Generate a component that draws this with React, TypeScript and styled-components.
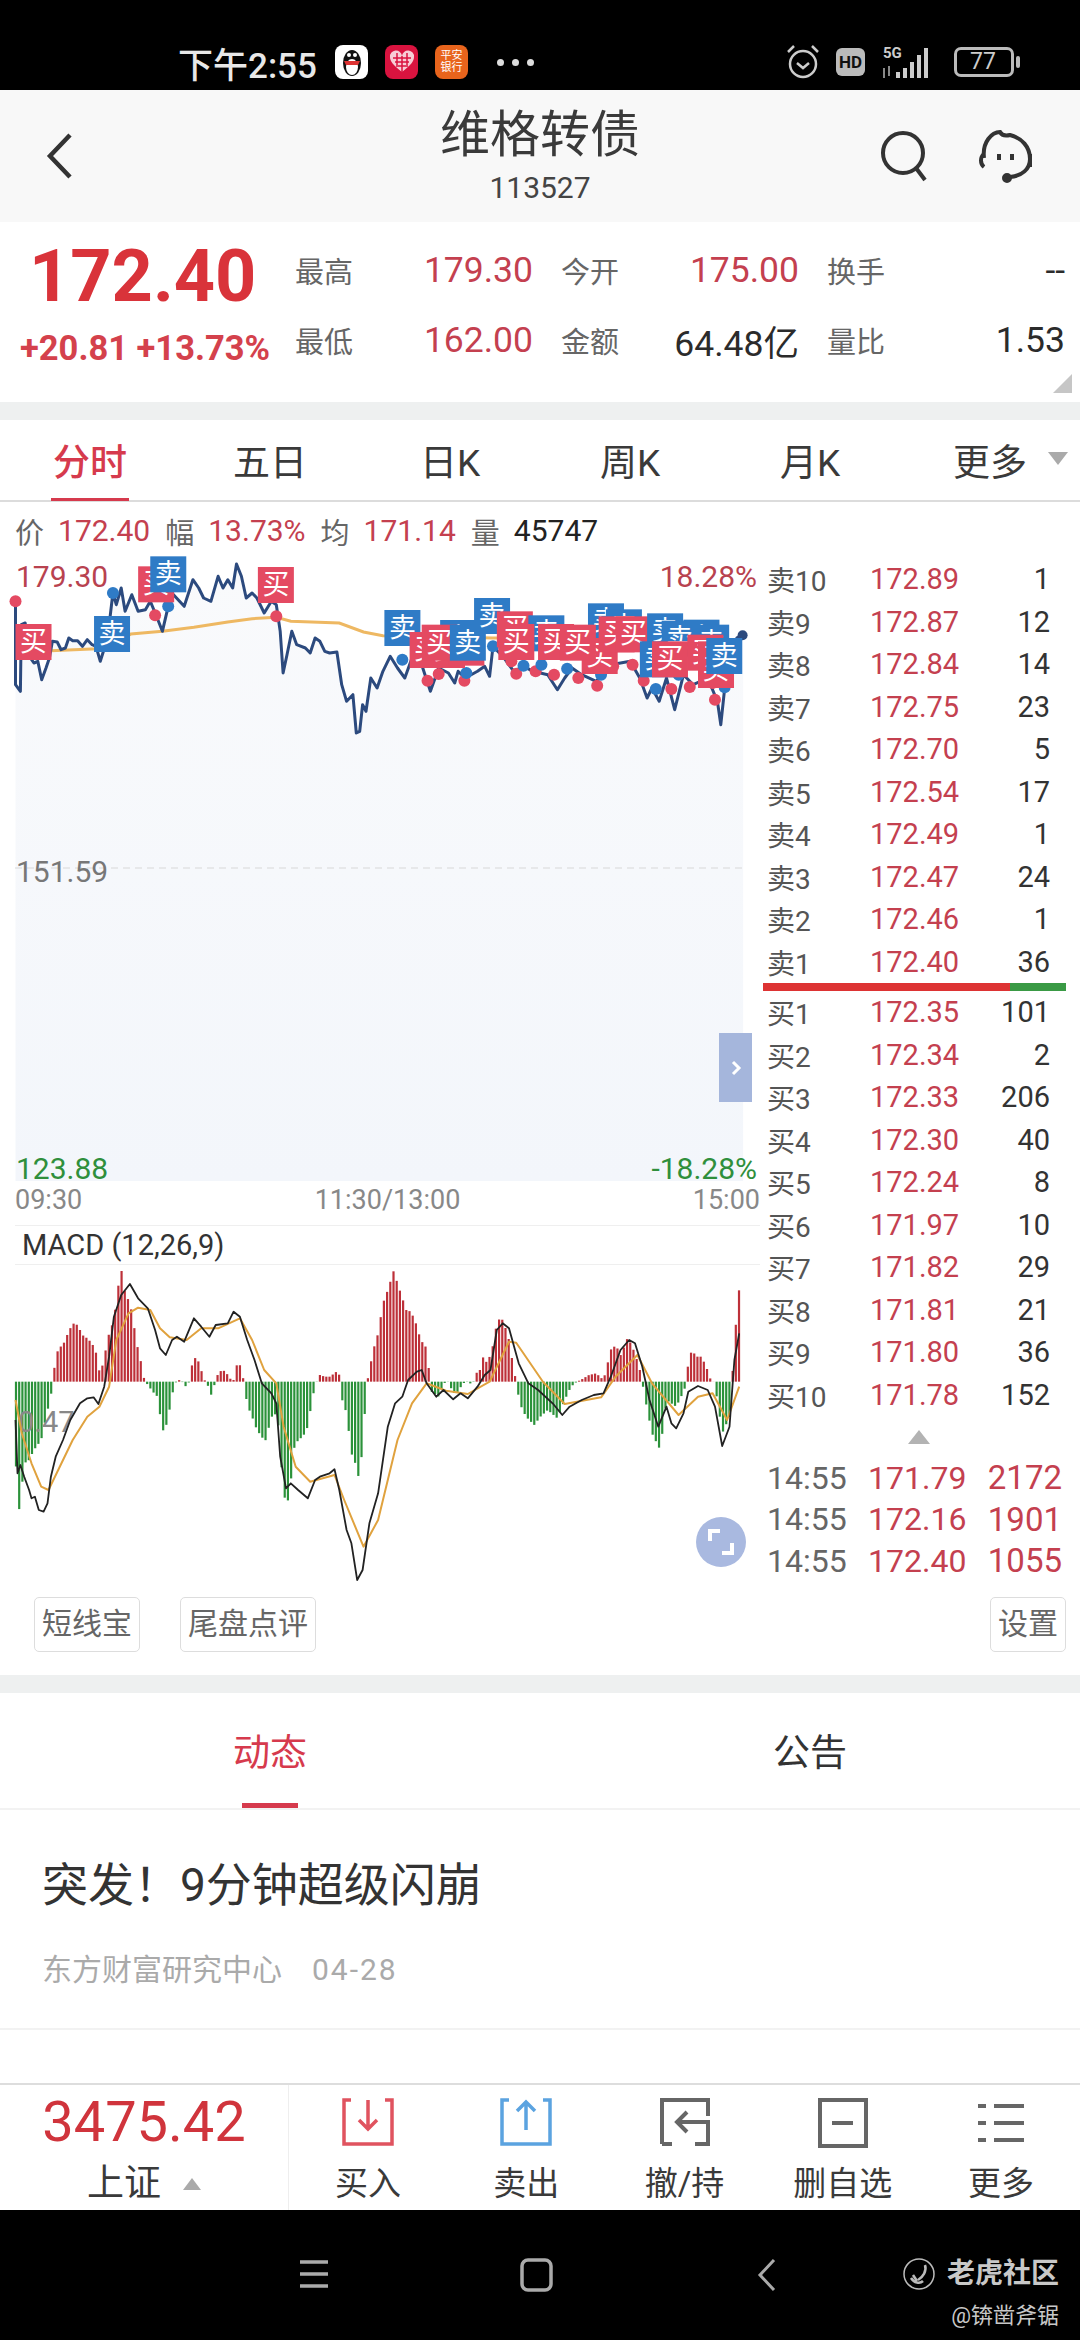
import React from "react";
import styled, { createGlobalStyle } from "styled-components";

const FONT = `Roboto, "Noto Sans CJK SC", sans-serif`;
const RED = "#c4404f";

const GlobalStyle = createGlobalStyle`
  html, body { margin: 0; padding: 0; background: #fff; }
  * { box-sizing: border-box; }
  body { font-family: ${FONT}; }
`;

const Page = styled.div`
  width: 1080px;
  height: 2340px;
  overflow: hidden;
  display: flex;
  flex-direction: column;
  background: #fff;
  color: #333;
`;

/* ---------- status bar ---------- */
const StatusBar = styled.div`
  height: 90px;
  flex: none;
  background: #000;
  color: #e8e8e8;
  display: flex;
  align-items: center;
  padding: 34px 0 0 178px;
`;
const Clock = styled.span`
  font-size: 35px;
  font-weight: 500;
  width: 157px;
`;
const AppBadge = styled.span<{ $bg: string }>`
  width: 33px;
  height: 34px;
  margin-right: 17px;
  border-radius: 8px;
  background: ${(p) => p.$bg};
  display: flex;
  align-items: center;
  justify-content: center;
  flex: none;
`;
const BadgeText = styled.span`
  font-size: 11px;
  line-height: 12px;
  color: #fff;
  text-align: center;
  width: 24px;
`;
const Dots = styled.span`
  display: flex;
  gap: 8px;
  margin-left: 12px;
`;
const Dot = styled.i`
  width: 7px;
  height: 7px;
  border-radius: 50%;
  background: #ddd;
`;
const StatusRight = styled.div`
  margin-left: auto;
  padding-right: 66px;
  display: flex;
  align-items: center;
  gap: 16px;
`;
const HdBadge = styled.span`
  width: 29px;
  height: 28px;
  border-radius: 6px;
  background: #bbb;
  color: #111;
  font-size: 17px;
  font-weight: 700;
  display: flex;
  align-items: center;
  justify-content: center;
`;
const Battery = styled.span`
  width: 60px;
  height: 30px;
  border: 3px solid #bbb;
  border-radius: 7px;
  color: #ccc;
  font-size: 23px;
  line-height: 24px;
  padding-left: 13px;
  position: relative;
  margin-left: 1px;
  &::after {
    content: "";
    position: absolute;
    right: -9px;
    top: 6px;
    width: 4px;
    height: 12px;
    border-radius: 2px;
    background: #bbb;
  }
`;

/* ---------- title bar ---------- */
const TitleBar = styled.div`
  height: 132px;
  flex: none;
  background: #f8f8f8;
  display: grid;
  grid-template-columns: 1fr auto 1fr;
  align-items: center;
  padding: 0 44px 0 44px;
`;
const TitleBlock = styled.div`
  text-align: center;
`;
const Title = styled.div`
  font-size: 50px;
  line-height: 64px;
  color: #3a3a3a;
`;
const Code = styled.div`
  font-size: 30px;
  line-height: 42px;
  color: #444;
`;
const TitleActions = styled.div`
  display: flex;
  justify-content: flex-end;
  align-items: center;
  gap: 46px;
`;

/* ---------- quote ---------- */
const Quote = styled.div`
  height: 180px;
  flex: none;
  position: relative;
  display: flex;
  padding-top: 13px;
`;
const QuoteMain = styled.div`
  width: 295px;
  flex: none;
  padding-left: 20px;
`;
const BigPrice = styled.div`
  font-size: 72px;
  line-height: 84px;
  font-weight: 700;
  color: #d9333a;
  padding-left: 9px;
  white-space: nowrap;
`;
const Change = styled.div`
  margin-top: 9px;
  font-size: 34.5px;
  line-height: 40px;
  font-weight: 700;
  color: #d4414c;
  white-space: nowrap;
`;
const QuoteGrid = styled.div`
  display: grid;
  grid-template-columns: repeat(3, 238px);
  grid-auto-rows: 70px;
  column-gap: 28px;
`;
const QuoteCell = styled.div`
  display: flex;
  align-items: center;
  justify-content: space-between;
`;
const QuoteLabel = styled.span`
  font-size: 29px;
  color: #666;
`;
const QuoteValue = styled.span<{ $red?: boolean }>`
  font-size: 35.5px;
  color: ${(p) => (p.$red ? RED : "#2b2b2b")};
`;
const CornerMark = styled.i`
  position: absolute;
  right: 8px;
  bottom: 9px;
  width: 0;
  height: 0;
  border-left: 19px solid transparent;
  border-bottom: 19px solid #c6c6c6;
`;
const Gap = styled.div`
  height: 18px;
  flex: none;
  background: #eef0f0;
`;

/* ---------- period tabs ---------- */
const PeriodTabs = styled.div`
  height: 82px;
  flex: none;
  display: grid;
  grid-template-columns: repeat(6, 180px);
  border-bottom: 2px solid #dcdcdc;
`;
const PeriodTab = styled.div<{ $active?: boolean }>`
  position: relative;
  display: flex;
  align-items: center;
  justify-content: center;
  font-size: 37px;
  font-weight: ${(p) => (p.$active ? 500 : 400)};
  color: ${(p) => (p.$active ? "#d63a4d" : "#3a3a3a")};
  &::after {
    content: "";
    display: ${(p) => (p.$active ? "block" : "none")};
    position: absolute;
    left: 51px;
    right: 51px;
    bottom: -1px;
    height: 3px;
    background: #d63a4d;
  }
`;
const MoreCaret = styled.i`
  position: absolute;
  right: 12px;
  top: 32px;
  border-left: 10px solid transparent;
  border-right: 10px solid transparent;
  border-top: 13px solid #aaa;
`;

/* ---------- chart panel ---------- */
const ChartPanel = styled.div`
  height: 1173px;
  flex: none;
  display: flex;
  flex-direction: column;
`;
const MainRow = styled.div`
  height: 1088px;
  display: flex;
`;
const ChartColumn = styled.div`
  width: 760px;
  flex: none;
  display: flex;
  flex-direction: column;
`;
const InfoRow = styled.div`
  height: 53px;
  display: flex;
  align-items: center;
  padding: 6px 0 0 15px;
  font-size: 30px;
  white-space: nowrap;
`;
const InfoLabel = styled.span`
  color: #666;
  font-size: 29px;
  margin-right: 14px;
`;
const InfoValue = styled.span<{ $red?: boolean }>`
  color: ${(p) => (p.$red ? RED : "#222")};
  margin-right: 15px;
`;
const Plot = styled.div<{ $height: number }>`
  position: relative;
  height: ${(p) => p.$height}px;
  flex: none;
  svg {
    display: block;
    overflow: visible;
  }
`;
const PlotLabel = styled.span<{ $color: string; $top: number; $right?: boolean }>`
  position: absolute;
  top: ${(p) => p.$top}px;
  ${(p) => (p.$right ? "right: 3px;" : "left: 16px;")}
  font-size: 30px;
  line-height: 36px;
  color: ${(p) => p.$color};
`;
const CollapseTab = styled.div`
  position: absolute;
  left: 719px;
  top: 480px;
  width: 33px;
  height: 69px;
  background: #a5b6dc;
  color: #fff;
  display: flex;
  align-items: center;
  justify-content: center;
`;
const TimeAxis = styled.div`
  height: 40px;
  display: flex;
  justify-content: space-between;
  align-items: center;
  padding: 0 0 0 15px;
  font-size: 27px;
  color: #888;
`;
const MacdHeader = styled.div`
  height: 42px;
  margin: 5px 0 0 15px;
  padding-left: 7px;
  border-top: 1px solid #efefef;
  border-bottom: 1px solid #efefef;
  font-size: 29px;
  line-height: 38px;
  color: #333;
`;
const ExpandButton = styled.div`
  position: absolute;
  left: 696px;
  top: 252px;
  width: 50px;
  height: 50px;
  border-radius: 50%;
  background: #a9b9e0;
  display: flex;
  align-items: center;
  justify-content: center;
`;

/* ---------- order book ---------- */
const Book = styled.div`
  flex: 1;
  padding: 56px 14px 0 3px;
  display: flex;
  flex-direction: column;
`;
const BookRow = styled.div`
  height: 42.5px;
  display: flex;
  align-items: center;
  padding-left: 4px;
  white-space: nowrap;
`;
const BookLabel = styled.span`
  width: 103px;
  font-size: 28px;
  color: #555;
`;
const BookPrice = styled.span`
  width: 92px;
  font-size: 29px;
  color: ${RED};
`;
const BookQty = styled.span`
  width: 88px;
  text-align: right;
  font-size: 29px;
  color: #333;
`;
const SplitBar = styled.div`
  height: 8px;
  display: flex;
`;
const SplitPart = styled.i<{ $color: string; $flex: number }>`
  flex: ${(p) => p.$flex};
  background: ${(p) => p.$color};
`;
const BookCaret = styled.i`
  align-self: center;
  width: 0;
  height: 0;
  margin: 14px 0 13px 8px;
  border-left: 11px solid transparent;
  border-right: 11px solid transparent;
  border-bottom: 14px solid #b3b3b3;
`;
const TickRow = styled.div`
  height: 41.5px;
  display: flex;
  align-items: center;
  padding: 0 0 0 4px;
  font-size: 32px;
  white-space: nowrap;
`;
const TickTime = styled.span`
  width: 101px;
  color: #666;
`;
const TickPrice = styled.span`
  width: 104px;
  color: ${RED};
`;
const TickQty = styled.span`
  width: 90px;
  text-align: right;
  font-size: 33px;
  color: ${RED};
`;

/* ---------- tool buttons ---------- */
const ToolRow = styled.div`
  display: flex;
  gap: 40px;
  margin-top: 7px;
  padding: 0 14px 0 34px;
`;
const ToolButton = styled.div<{ $push?: boolean }>`
  height: 55px;
  padding: 0 7px;
  border: 1px solid #ddd;
  border-radius: 5px;
  font-size: 30px;
  line-height: 52px;
  color: #666;
  ${(p) => (p.$push ? "margin-left: auto;" : "")}
`;

/* ---------- news ---------- */
const SectionTabs = styled.div`
  height: 117px;
  flex: none;
  display: grid;
  grid-template-columns: 1fr 1fr;
  border-bottom: 2px solid #f2f2f2;
`;
const SectionTab = styled.div<{ $active?: boolean }>`
  position: relative;
  display: flex;
  align-items: center;
  justify-content: center;
  font-size: 37px;
  padding-bottom: 2px;
  color: ${(p) => (p.$active ? "#d63a4d" : "#333")};
  &::after {
    content: "";
    display: ${(p) => (p.$active ? "block" : "none")};
    position: absolute;
    left: 50%;
    margin-left: -28px;
    width: 56px;
    bottom: 0;
    height: 5px;
    background: #d63a4d;
  }
`;
const NewsItem = styled.div`
  height: 220px;
  flex: none;
  padding: 45px 42px 0;
  border-bottom: 2px solid #f2f2f2;
`;
const Headline = styled.div`
  font-size: 46px;
  line-height: 60px;
  color: #333;
`;
const NewsMeta = styled.div`
  margin-top: 35px;
  display: flex;
  gap: 30px;
  font-size: 30px;
  line-height: 40px;
  color: #aaa;
`;
const MetaDate = styled.span`
  letter-spacing: 2px;
`;
const Filler = styled.div`
  flex: 1;
`;

/* ---------- bottom bar ---------- */
const BottomBar = styled.div`
  height: 127px;
  flex: none;
  display: flex;
  border-top: 2px solid #ddd;
`;
const IndexBox = styled.div`
  width: 289px;
  flex: none;
  border-right: 1px solid #eee;
  text-align: center;
`;
const IndexValue = styled.div`
  font-size: 56px;
  line-height: 74px;
  color: #d0343c;
`;
const IndexName = styled.div`
  font-size: 37px;
  line-height: 50px;
  color: #3a3a3a;
  display: flex;
  align-items: center;
  justify-content: center;
  gap: 22px;
`;
const IndexCaret = styled.i`
  border-left: 9px solid transparent;
  border-right: 9px solid transparent;
  border-bottom: 12px solid #aaa;
`;
const ActionItem = styled.div`
  flex: 1;
  display: flex;
  flex-direction: column;
  align-items: center;
  padding-top: 13px;
  font-size: 33px;
  line-height: 44px;
  color: #3a3a3a;
  svg {
    display: block;
    margin-bottom: 14px;
  }
`;

/* ---------- system nav ---------- */
const NavBar = styled.div`
  height: 130px;
  flex: none;
  position: relative;
  background: #000;
  display: flex;
  align-items: flex-start;
  padding: 48px 0 0 298px;
  gap: 190px;
`;
const NavBack = styled.svg`
  margin-left: 14px;
`;
const Watermark = styled.div`
  position: absolute;
  right: 21px;
  top: 46px;
  text-align: right;
  color: #c8c8c8;
`;
const WatermarkBrand = styled.div`
  display: flex;
  align-items: center;
  gap: 12px;
  font-size: 28px;
  line-height: 36px;
  font-weight: 700;
`;
const WatermarkUser = styled.div`
  margin-top: 10px;
  font-size: 22px;
  line-height: 28px;
`;

/* ---------- data ---------- */
type P = [number, number];

// coordinates read off the price chart crop
const px = (x: number) => x / 2.063;
const py = (y: number) => y / 3 - 55;
const my = (y: number) => y / 3 - 65;

const PRICE_LINE: P[] = [
  [32,310],[32,560],[42,580],[44,380],[52,375],[58,470],[70,495],[78,490],[86,545],[95,510],[102,480],[108,430],[118,432],[126,455],[135,450],[142,420],[150,428],[160,428],[170,445],[180,425],[190,440],[198,445],[207,490],[222,420],[233,285],[240,320],[250,270],[258,340],[272,290],[285,340],[300,335],[310,310],[322,352],[335,400],[347,325],[358,290],[380,325],[398,245],[410,270],[420,300],[435,310],[450,235],[460,270],[470,245],[480,270],[488,198],[498,235],[508,300],[520,285],[530,300],[545,345],[560,310],[570,320],[578,400],[584,525],[592,470],[602,400],[612,440],[630,450],[640,465],[650,420],[660,430],[670,460],[680,465],[695,462],[705,560],[715,610],[728,590],[735,705],[742,700],[748,620],[755,640],[765,540],[778,570],[790,520],[805,475],[820,510],[835,540],[850,480],[870,500],[888,580],[905,510],[925,525],[938,555],[945,520],[960,540],[985,520],[1000,505],[1010,535],[1017,445],[1040,480],[1060,520],[1080,505],[1100,520],[1130,530],[1150,575],[1165,540],[1180,510],[1200,530],[1230,550],[1260,500],[1300,490],[1320,540],[1335,600],[1345,570],[1360,610],[1375,540],[1392,635],[1410,530],[1430,560],[1460,540],[1480,610],[1487,680],[1495,570],[1510,480],[1520,420],[1533,412],
];
const AVG_LINE: P[] = [
  [105,458],[200,452],[270,408],[335,400],[400,388],[470,372],[520,362],[570,358],[600,370],[700,375],[750,402],[790,413],[870,415],[1015,420],[1500,420],
];
const FLAGS: [number, number, "买" | "卖"][] = [
  [32,378,"买"],[194,354,"卖"],[285,205,"买"],[310,175,"卖"],[532,207,"买"],[793,336,"卖"],[845,402,"买"],[885,402,"买"],[925,395,"买"],[908,366,"卖"],[870,380,"买"],[928,380,"卖"],[978,300,"卖"],[1025,340,"买"],[1090,352,"卖"],[1110,378,"买"],[1028,378,"买"],[1213,316,"卖"],[1250,334,"卖"],[1200,420,"买"],[1155,380,"买"],[1235,355,"买"],[1270,355,"买"],[1335,346,"卖"],[1320,430,"卖"],[1410,365,"卖"],[1430,380,"卖"],[1365,368,"卖"],[1345,430,"买"],[1418,410,"买"],[1440,430,"买"],[1440,462,"买"],[1457,420,"卖"],
];
const RED_DOTS: P[] = [
  [32,310],[320,352],[570,355],[882,548],[905,528],[958,548],[1055,490],[1065,527],[1105,520],[1143,530],[1193,540],[1232,563],[1265,505],[1305,500],[1328,548],[1385,573],[1423,567],[1470,555],[1475,605],
];
const BLUE_DOTS: P[] = [
  [233,285],[347,325],[830,485],[962,525],[1017,445],[1080,503],[1117,500],[1170,512],[1240,530],[1353,573],[1400,530],[1495,568],
];

// histogram outline: x, bar end in crop coordinates, 545 is the zero line
const MACD_ZERO = 545;
const HIST: P[] = [
  [32,780],[40,935],[50,790],[60,780],[70,750],[85,720],[95,650],[105,590],[108,545],[112,505],[120,445],[130,435],[140,400],[150,370],[160,375],[170,405],[180,415],[190,430],[200,465],[205,515],[210,505],[218,450],[225,400],[235,360],[243,265],[252,205],[258,280],[265,300],[272,335],[282,430],[290,480],[296,530],[300,545],[305,555],[315,575],[325,590],[335,695],[345,670],[352,610],[360,550],[365,545],[370,540],[380,550],[385,565],[390,545],[398,480],[406,470],[415,510],[422,540],[430,560],[437,590],[443,550],[450,520],[458,510],[466,515],[473,535],[482,540],[490,485],[497,500],[503,545],[510,615],[520,650],[530,690],[547,725],[555,680],[565,630],[575,680],[585,890],[597,905],[605,750],[615,720],[625,710],[635,680],[645,590],[652,550],[660,525],[670,530],[680,530],[690,520],[698,510],[702,545],[706,600],[715,640],[725,760],[733,790],[742,845],[750,690],[757,550],[770,450],[780,400],[790,310],[800,270],[812,213],[820,250],[828,285],[838,330],[848,335],[858,370],[868,420],[878,440],[885,510],[890,575],[905,590],[915,550],[925,545],[935,580],[945,575],[955,550],[965,545],[975,555],[982,520],[990,510],[997,470],[1005,490],[1015,450],[1025,370],[1033,350],[1040,370],[1050,420],[1060,510],[1065,545],[1072,610],[1085,650],[1102,675],[1115,650],[1130,630],[1150,655],[1165,600],[1178,560],[1190,545],[1198,540],[1215,525],[1230,520],[1245,540],[1262,440],[1272,440],[1282,470],[1292,415],[1302,430],[1312,470],[1322,520],[1330,590],[1345,700],[1362,750],[1375,600],[1395,620],[1412,570],[1420,490],[1427,450],[1437,470],[1447,470],[1457,500],[1465,535],[1472,545],[1480,600],[1490,700],[1505,650],[1510,545],[1515,430],[1522,300],[1529,222],
];
const DIF_LINE: P[] = [
  [32,660],[36,820],[42,795],[50,830],[60,870],[65,895],[72,890],[80,930],[90,935],[98,910],[105,830],[115,770],[130,720],[145,660],[165,610],[180,595],[193,592],[203,612],[215,560],[225,470],[235,350],[250,285],[268,252],[285,295],[305,325],[320,390],[330,445],[342,465],[355,420],[365,410],[380,425],[400,355],[415,380],[432,410],[445,375],[470,370],[482,335],[495,350],[510,420],[525,480],[540,550],[560,580],[570,610],[578,770],[590,865],[600,850],[615,870],[635,895],[650,840],[660,830],[680,820],[690,808],[700,870],[715,990],[725,1030],[737,1140],[748,1110],[762,970],[780,880],[800,680],[815,610],[830,590],[842,540],[860,515],[870,510],[880,550],[900,590],[915,570],[935,598],[950,580],[965,595],[985,560],[1000,525],[1012,510],[1025,390],[1037,370],[1050,385],[1070,490],[1090,550],[1110,570],[1140,610],[1160,645],[1175,620],[1200,600],[1225,585],[1245,580],[1260,530],[1280,450],[1298,420],[1310,430],[1325,500],[1340,600],[1358,680],[1375,620],[1385,670],[1395,685],[1410,640],[1420,575],[1440,558],[1460,570],[1475,620],[1490,738],[1505,680],[1515,480],[1525,400],
];
const DEA_LINE: P[] = [
  [32,600],[45,700],[65,790],[85,860],[100,870],[120,810],[150,720],[180,650],[205,620],[225,560],[240,420],[265,340],[285,323],[310,330],[330,385],[350,412],[385,420],[415,385],[450,385],[495,355],[520,420],[545,510],[570,550],[585,680],[610,800],[640,845],[690,825],[710,900],[750,1040],[780,960],[820,720],[850,610],[880,550],[920,572],[965,582],[1010,545],[1050,425],[1065,428],[1120,545],[1165,612],[1240,592],[1270,530],[1315,465],[1345,550],[1400,645],[1440,590],[1470,580],[1500,660],[1525,560],
];

const histAt = (x: number) => {
  for (let i = 1; i < HIST.length; i++) {
    if (x <= HIST[i][0]) {
      const [x0, y0] = HIST[i - 1];
      const [x1, y1] = HIST[i];
      return y0 + ((y1 - y0) * (x - x0)) / (x1 - x0);
    }
  }
  return MACD_ZERO;
};

const priceStr = (pts: P[]) => pts.map(([x, y]) => `${px(x).toFixed(1)},${py(y).toFixed(1)}`).join(" ");
const macdStr = (pts: P[]) => pts.map(([x, y]) => `${px(x).toFixed(1)},${my(y).toFixed(1)}`).join(" ");

const ASKS: [string, string, string][] = [
  ["卖10", "172.89", "1"],
  ["卖9", "172.87", "12"],
  ["卖8", "172.84", "14"],
  ["卖7", "172.75", "23"],
  ["卖6", "172.70", "5"],
  ["卖5", "172.54", "17"],
  ["卖4", "172.49", "1"],
  ["卖3", "172.47", "24"],
  ["卖2", "172.46", "1"],
  ["卖1", "172.40", "36"],
];
const BIDS: [string, string, string][] = [
  ["买1", "172.35", "101"],
  ["买2", "172.34", "2"],
  ["买3", "172.33", "206"],
  ["买4", "172.30", "40"],
  ["买5", "172.24", "8"],
  ["买6", "171.97", "10"],
  ["买7", "171.82", "29"],
  ["买8", "171.81", "21"],
  ["买9", "171.80", "36"],
  ["买10", "171.78", "152"],
];
const TICKS = [
  ["14:55", "171.79", "2172"],
  ["14:55", "172.16", "1901"],
  ["14:55", "172.40", "1055"],
];

const PriceChart = () => {
  const area = `${px(32)},628 ${priceStr(PRICE_LINE)} ${px(1533)},628`;
  return (
    <Plot $height={628}>
      <svg width={760} height={628}>
        <defs>
          <linearGradient id="areaFill" x1="0" y1="0" x2="0" y2="1">
            <stop offset="0" stopColor="#f9fafc" />
            <stop offset="1" stopColor="#f3f6fb" />
          </linearGradient>
        </defs>
        <polygon points={area} fill="url(#areaFill)" />
        <line x1={15} x2={745} y1={315} y2={315} stroke="#d8d8d8" strokeWidth={1} strokeDasharray="7 5" />
        <polyline points={priceStr(AVG_LINE)} fill="none" stroke="#eeb862" strokeWidth={3} />
        <polyline points={priceStr(PRICE_LINE)} fill="none" stroke="#2c4a7e" strokeWidth={3} strokeLinejoin="round" />
        {RED_DOTS.map(([x, y]) => (
          <circle key={`r${x}`} cx={px(x)} cy={py(y)} r={6} fill="#e44a62" />
        ))}
        {BLUE_DOTS.map(([x, y]) => (
          <circle key={`b${x}`} cx={px(x)} cy={py(y)} r={6} fill="#2f7bc6" />
        ))}
        <circle cx={px(1532)} cy={py(412)} r={5} fill="#2c4a7e" />
        {FLAGS.map(([x, y, t]) => (
          <g key={`${x}-${y}`}>
            <rect x={px(x)} y={py(y)} width={36} height={36} fill={t === "买" ? "#e44a62" : "#2f7bc6"} />
            <text x={px(x) + 18} y={py(y) + 27} textAnchor="middle" fontSize={27} fill="#fff" fontFamily={FONT}>
              {t}
            </text>
          </g>
        ))}
      </svg>
      <PlotLabel $top={6} $color="#b8424f">179.30</PlotLabel>
      <PlotLabel $top={6} $right $color="#b8424f">18.28%</PlotLabel>
      <PlotLabel $top={301} $color="#777">151.59</PlotLabel>
      <PlotLabel $top={598} $color="#2f8f3c">123.88</PlotLabel>
      <PlotLabel $top={598} $right $color="#2f8f3c">-18.28%</PlotLabel>
      <CollapseTab>
        <svg width={14} height={22} viewBox="0 0 14 22">
          <path d="M4 5l6 6-6 6" fill="none" stroke="#fff" strokeWidth={3} />
        </svg>
      </CollapseTab>
    </Plot>
  );
};

const MacdChart = () => {
  const bars: React.ReactNode[] = [];
  for (let x = 33; x <= 1530; x += 6.6) {
    const end = histAt(x);
    const up = end < MACD_ZERO;
    bars.push(
      <line
        key={x}
        x1={px(x)}
        x2={px(x)}
        y1={my(MACD_ZERO)}
        y2={my(end)}
        stroke={up ? "#bd3039" : "#2b923a"}
        strokeWidth={2.2}
      />,
    );
  }
  return (
    <Plot $height={325}>
      <svg width={760} height={325}>
        {bars}
        <text x={18} y={167} fontSize={29} fill="#888" fontFamily={FONT}>
          0.47
        </text>
        <polyline points={macdStr(DEA_LINE)} fill="none" stroke="#e0a23e" strokeWidth={2} strokeLinejoin="round" />
        <polyline points={macdStr(DIF_LINE)} fill="none" stroke="#222" strokeWidth={1.8} strokeLinejoin="round" />
      </svg>
      <ExpandButton>
        <svg width={30} height={30} viewBox="0 0 30 30">
          <path d="M4 14V4h10M26 16v10H16" fill="none" stroke="#fff" strokeWidth={4} />
        </svg>
      </ExpandButton>
    </Plot>
  );
};

const BuyIcon = () => (
  <svg width={52} height={50} viewBox="0 0 52 50" fill="none" stroke="#e0535f" strokeWidth={3.5}>
    <path d="M2 10V2h7M43 2h7v8" />
    <path d="M2 10v36h48V10" />
    <path d="M26 2v28M17 22l9 9 9-9" />
  </svg>
);
const SellIcon = () => (
  <svg width={52} height={50} viewBox="0 0 52 50" fill="none" stroke="#5ba3e0" strokeWidth={3.5}>
    <path d="M2 10V2h7M43 2h7v8" />
    <path d="M2 10v36h48V10" />
    <path d="M26 32V4M17 13l9-9 9 9" />
  </svg>
);
const RevokeIcon = () => (
  <svg width={52} height={50} viewBox="0 0 52 50" fill="none" stroke="#666" strokeWidth={4}>
    <path d="M3 46V2h46v16M3 46h10M36 46h13V24H18" />
    <path d="M28 14L18 24l10 10" />
  </svg>
);
const RemoveIcon = () => (
  <svg width={52} height={50} viewBox="0 0 52 50" fill="none" stroke="#666" strokeWidth={4}>
    <rect x={3} y={2} width={46} height={46} />
    <path d="M15 25h21" />
  </svg>
);
const MoreIcon = () => (
  <svg width={52} height={50} viewBox="0 0 52 50" fill="none" stroke="#666" strokeWidth={4}>
    <path d="M3 8h8M19 8h30M3 25h8M19 25h30M3 42h8M19 42h30" />
  </svg>
);

export default function App() {
  return (
    <Page>
      <GlobalStyle />
      <StatusBar>
        <Clock>下午2:55</Clock>
        <AppBadge $bg="#fff">
          <svg width={24} height={30} viewBox="0 0 24 30">
            <ellipse cx={12} cy={16} rx={9} ry={13} fill="#111" />
            <ellipse cx={12} cy={20} rx={6} ry={8} fill="#fff" />
            <path d="M4 14h16l-2 4H6z" fill="#d33" />
            <circle cx={9} cy={8} r={2} fill="#fff" />
            <circle cx={15} cy={8} r={2} fill="#fff" />
          </svg>
        </AppBadge>
        <AppBadge $bg="#d9133f">
          <svg width={26} height={24} viewBox="0 0 26 24">
            <path d="M13 22C4 15 1 11 1 7a6 6 0 0 1 12-1 6 6 0 0 1 12 1c0 4-3 8-12 15z" fill="#f7cdd6" />
            <path d="M4 8h18M6 12h14M9 16h8M8 3v14M13 6v16M18 3v14" stroke="#d9133f" strokeWidth={1.5} />
          </svg>
        </AppBadge>
        <AppBadge $bg="#e8641c">
          <BadgeText>平安银行</BadgeText>
        </AppBadge>
        <Dots>
          <Dot />
          <Dot />
          <Dot />
        </Dots>
        <StatusRight>
          <svg width={34} height={36} viewBox="0 0 34 36" fill="none" stroke="#ccc" strokeWidth={2.5}>
            <circle cx={17} cy={20} r={13} />
            <path d="M11 19l6 5 6-5M2 8l6-6M32 8l-6-6" />
          </svg>
          <HdBadge>HD</HdBadge>
          <svg width={56} height={36} viewBox="0 0 56 36">
            <text x={2} y={14} fontSize={15} fontWeight={700} fill="#ccc" fontFamily={FONT}>5G</text>
            <path d="M3 24v10M8 22v10" stroke="#888" strokeWidth={2} />
            <path d="M17 28v6M24 24v10M31 18v16M38 11v23M45 4v30" stroke="#ccc" strokeWidth={4} />
          </svg>
          <Battery>77</Battery>
        </StatusRight>
      </StatusBar>

      <TitleBar>
        <svg width={30} height={48} viewBox="0 0 30 48">
          <path d="M26 3L6 24l20 21" fill="none" stroke="#333" strokeWidth={4.5} />
        </svg>
        <TitleBlock>
          <Title>维格转债</Title>
          <Code>113527</Code>
        </TitleBlock>
        <TitleActions>
          <svg width={50} height={52} viewBox="0 0 50 52" fill="none" stroke="#333" strokeWidth={4}>
            <circle cx={23} cy={23} r={20} />
            <path d="M36 38l9 12" />
          </svg>
          <svg width={60} height={56} viewBox="0 0 60 56" fill="none" stroke="#333" strokeWidth={4}>
            <path d="M8 30C6 14 16 4 24 4c2 4 6 4 10 3 12 3 20 12 20 24 0 10-8 17-20 18" />
            <path d="M8 26c-4 3-4 10 0 13M54 26v13" />
            <circle cx={31} cy={50} r={3} fill="#333" />
            <path d="M23 26v6M36 26v6" />
          </svg>
        </TitleActions>
      </TitleBar>

      <Quote>
        <QuoteMain>
          <BigPrice>172.40</BigPrice>
          <Change>+20.81 +13.73%</Change>
        </QuoteMain>
        <QuoteGrid>
          <QuoteCell>
            <QuoteLabel>最高</QuoteLabel>
            <QuoteValue $red>179.30</QuoteValue>
          </QuoteCell>
          <QuoteCell>
            <QuoteLabel>今开</QuoteLabel>
            <QuoteValue $red>175.00</QuoteValue>
          </QuoteCell>
          <QuoteCell>
            <QuoteLabel>换手</QuoteLabel>
            <QuoteValue>--</QuoteValue>
          </QuoteCell>
          <QuoteCell>
            <QuoteLabel>最低</QuoteLabel>
            <QuoteValue $red>162.00</QuoteValue>
          </QuoteCell>
          <QuoteCell>
            <QuoteLabel>金额</QuoteLabel>
            <QuoteValue>64.48亿</QuoteValue>
          </QuoteCell>
          <QuoteCell>
            <QuoteLabel>量比</QuoteLabel>
            <QuoteValue>1.53</QuoteValue>
          </QuoteCell>
        </QuoteGrid>
        <CornerMark />
      </Quote>
      <Gap />

      <PeriodTabs>
        <PeriodTab $active>分时</PeriodTab>
        <PeriodTab>五日</PeriodTab>
        <PeriodTab>日K</PeriodTab>
        <PeriodTab>周K</PeriodTab>
        <PeriodTab>月K</PeriodTab>
        <PeriodTab>
          更多
          <MoreCaret />
        </PeriodTab>
      </PeriodTabs>

      <ChartPanel>
        <MainRow>
          <ChartColumn>
            <InfoRow>
              <InfoLabel>价</InfoLabel>
              <InfoValue $red>172.40</InfoValue>
              <InfoLabel>幅</InfoLabel>
              <InfoValue $red>13.73%</InfoValue>
              <InfoLabel>均</InfoLabel>
              <InfoValue $red>171.14</InfoValue>
              <InfoLabel>量</InfoLabel>
              <InfoValue>45747</InfoValue>
            </InfoRow>
            <PriceChart />
            <TimeAxis>
              <span>09:30</span>
              <span>11:30/13:00</span>
              <span>15:00</span>
            </TimeAxis>
            <MacdHeader>MACD (12,26,9)</MacdHeader>
            <MacdChart />
          </ChartColumn>
          <Book>
            {ASKS.map(([l, p, q]) => (
              <BookRow key={l}>
                <BookLabel>{l}</BookLabel>
                <BookPrice>{p}</BookPrice>
                <BookQty>{q}</BookQty>
              </BookRow>
            ))}
            <SplitBar>
              <SplitPart $color="#dd3333" $flex={247} />
              <SplitPart $color="#3a9a45" $flex={56} />
            </SplitBar>
            {BIDS.map(([l, p, q]) => (
              <BookRow key={l}>
                <BookLabel>{l}</BookLabel>
                <BookPrice>{p}</BookPrice>
                <BookQty>{q}</BookQty>
              </BookRow>
            ))}
            <BookCaret />
            {TICKS.map(([t, p, q]) => (
              <TickRow key={p}>
                <TickTime>{t}</TickTime>
                <TickPrice>{p}</TickPrice>
                <TickQty>{q}</TickQty>
              </TickRow>
            ))}
          </Book>
        </MainRow>
        <ToolRow>
          <ToolButton>短线宝</ToolButton>
          <ToolButton>尾盘点评</ToolButton>
          <ToolButton $push>设置</ToolButton>
        </ToolRow>
      </ChartPanel>
      <Gap />

      <SectionTabs>
        <SectionTab $active>动态</SectionTab>
        <SectionTab>公告</SectionTab>
      </SectionTabs>
      <NewsItem>
        <Headline>突发！9分钟超级闪崩</Headline>
        <NewsMeta>
          <span>东方财富研究中心</span>
          <MetaDate>04-28</MetaDate>
        </NewsMeta>
      </NewsItem>
      <Filler />

      <BottomBar>
        <IndexBox>
          <IndexValue>3475.42</IndexValue>
          <IndexName>
            上证
            <IndexCaret />
          </IndexName>
        </IndexBox>
        <ActionItem>
          <BuyIcon />
          买入
        </ActionItem>
        <ActionItem>
          <SellIcon />
          卖出
        </ActionItem>
        <ActionItem>
          <RevokeIcon />
          撤/持
        </ActionItem>
        <ActionItem>
          <RemoveIcon />
          删自选
        </ActionItem>
        <ActionItem>
          <MoreIcon />
          更多
        </ActionItem>
      </BottomBar>

      <NavBar>
        <svg width={32} height={32} viewBox="0 0 32 32" stroke="#aaa" strokeWidth={3.5}>
          <path d="M2 4h28M2 16h28M2 28h28" />
        </svg>
        <svg width={33} height={34} viewBox="0 0 33 34" fill="none" stroke="#aaa" strokeWidth={3.5}>
          <rect x={2} y={2} width={29} height={30} rx={6} />
        </svg>
        <NavBack width={20} height={34} viewBox="0 0 20 34" fill="none" stroke="#aaa" strokeWidth={3}>
          <path d="M17 2L3 17l14 15" />
        </NavBack>
        <Watermark>
          <WatermarkBrand>
            <svg width={32} height={32} viewBox="0 0 32 32" fill="none" stroke="#bbb" strokeWidth={1.5}>
              <circle cx={16} cy={16} r={15} />
              <path d="M22 7c2 6-2 12-7 15M8 20c3 5 9 6 12 3M10 17l4 6" strokeWidth={2.5} />
            </svg>
            老虎社区
          </WatermarkBrand>
          <WatermarkUser>@锛凿斧锯</WatermarkUser>
        </Watermark>
      </NavBar>
    </Page>
  );
}
